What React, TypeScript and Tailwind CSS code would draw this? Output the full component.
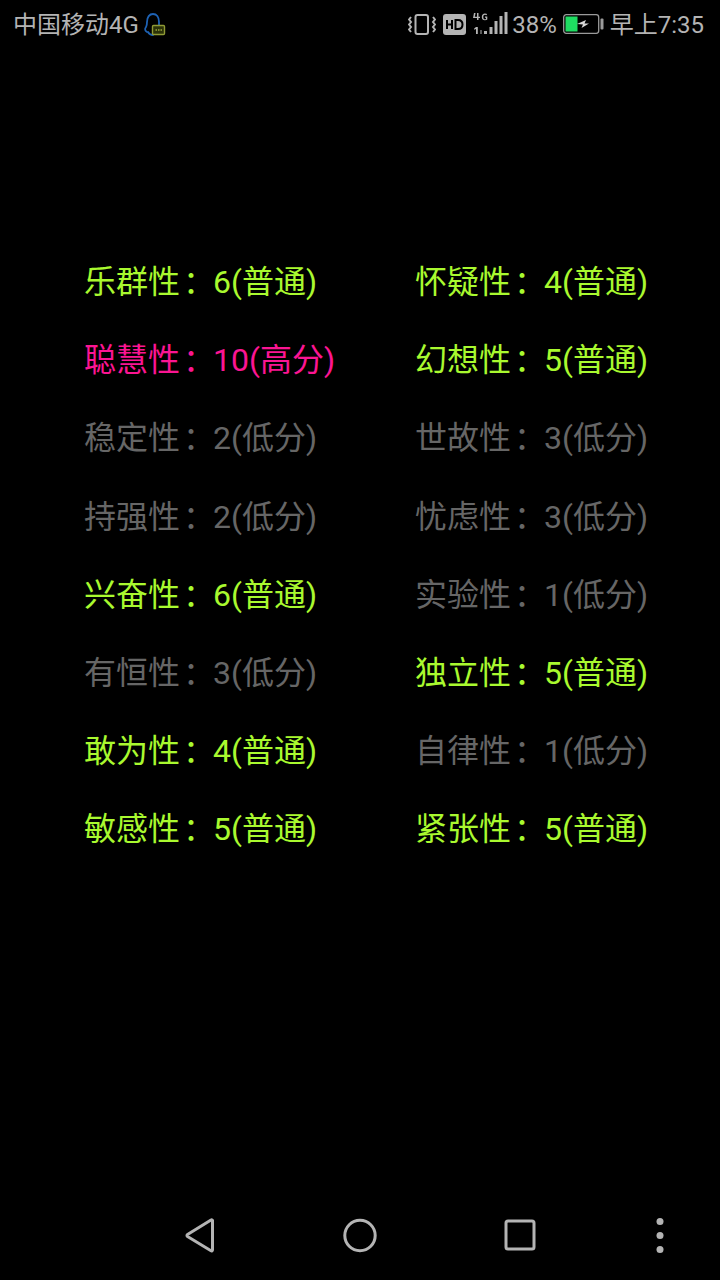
const G = "text-[#a9f92f]";
const P = "text-[#fb1592]";
const L = "text-[#666666]";

const rows: [string, string, string][] = [
  ["乐群性", "6(普通)", G],
  ["怀疑性", "4(普通)", G],
  ["聪慧性", "10(高分)", P],
  ["幻想性", "5(普通)", G],
  ["稳定性", "2(低分)", L],
  ["世故性", "3(低分)", L],
  ["持强性", "2(低分)", L],
  ["忧虑性", "3(低分)", L],
  ["兴奋性", "6(普通)", G],
  ["实验性", "1(低分)", L],
  ["有恒性", "3(低分)", L],
  ["独立性", "5(普通)", G],
  ["敢为性", "4(普通)", G],
  ["自律性", "1(低分)", L],
  ["敏感性", "5(普通)", G],
  ["紧张性", "5(普通)", G],
];

const font = "font-['Roboto','Noto_Sans_CJK_SC',sans-serif]";

function StatusBar() {
  return (
    <div className={`h-[50px] flex items-center justify-between pl-[13px] pr-[16px] text-[#b4b4b4] ${font}`}>
      <div className="flex items-center">
        <span className="text-[24px] leading-none">中国移动4G</span>
        <svg width="24" height="28" viewBox="0 0 24 28" className="ml-[4px]" fill="none">
          <path d="M4 21c-2-1-2.500-3-1-5 .5-1 1-2 1-5 0-5 2.500-8 6-8s6 3 6 8v3" stroke="#1e62b4" strokeWidth="1.800" strokeLinecap="round" />
          <path d="M5 21c1 2 3 3 5 3" stroke="#1e62b4" strokeWidth="1.800" strokeLinecap="round" />
          <rect x="9.500" y="14.500" width="12" height="9" rx="1" fill="#2b3208" stroke="#8f9a35" strokeWidth="1.400" />
          <path d="M12.500 19h1.500M15 19h1.500M17.500 19h1.500" stroke="#9aa53a" strokeWidth="1.400" />
        </svg>
      </div>
      <div className="flex items-center">
        <svg width="28" height="24" viewBox="0 0 28 24" fill="none" stroke="#b4b4b4">
          <rect x="7.500" y="2" width="12.500" height="19" rx="2" strokeWidth="2" />
          <path d="M3 4l-2 2.500L3 9l-2 2.500L3 14l-2 2.500L3 19M25 4l2 2.500L25 9l2 2.500L25 14l2 2.500L25 19" strokeWidth="2" />
        </svg>
        <svg width="24" height="22" viewBox="0 0 24 22" className="ml-[7px]">
          <rect x="0" y="0" width="23" height="21" rx="3" fill="#b4b4b4" />
          <path d="M4 6v9M4 10.500h5M9 6v9" stroke="#000" strokeWidth="2" fill="none" />
          <path d="M12.500 6v9h2.500c3 0 4.500-1.500 4.500-4.500S18 6 15 6z" stroke="#000" strokeWidth="2" fill="none" />
        </svg>
        <svg width="36" height="26" viewBox="0 0 36 26" className="ml-[6px]" fill="#b4b4b4">
          <path d="M1 1l-1 5h4v2h1.500V6H7V4.800H5.500V1H4v3.800H1.800L2.600 1zM12 1.500c-2 0-3.200 1.300-3.200 3.500s1.200 3.300 3.200 3.300c1 0 1.800-.3 2.300-.7V4.500H12v1.200h1v1.400c-.3.100-.6.200-1 .2-1.100 0-1.700-.8-1.700-2.300s.7-2.300 1.700-2.300c.6 0 1.100.2 1.500.5l.6-1.100c-.5-.4-1.200-.6-2.100-.6z" />
          <path d="M3 15h1.800v7H3v-5l-1.800.8v-1.300zM7.500 18h1v4h-1z" />
          <rect x="11" y="19" width="3" height="3" />
          <rect x="16.500" y="15" width="3" height="7" />
          <rect x="21.500" y="9" width="3" height="13" />
          <rect x="26.500" y="4" width="3" height="18" />
          <rect x="31.500" y="-1" width="3" height="23" />
        </svg>
        <span className="text-[24px] leading-none ml-[3px]">38%</span>
        <svg width="41" height="22" viewBox="0 0 41 22" className="ml-[6px]" fill="none">
          <rect x="0.700" y="0.700" width="35" height="18.600" rx="2.500" stroke="#9a9a9a" strokeWidth="1.300" />
          <rect x="2.500" y="2.500" width="12" height="15" fill="#1fdc62" />
          <path d="M14 10l9-4-1.500 3.500H26l-7.500 4.500 1.500-3.500z" fill="#d8d8d8" />
          <rect x="37.500" y="4.500" width="3" height="11" rx="1" fill="#9a9a9a" />
        </svg>
        <span className="text-[24px] leading-none ml-[6px]">早上7:35</span>
      </div>
    </div>
  );
}

function NavBar() {
  return (
    <div className="h-[88px] pt-[24px]">
      <svg width="720" height="50" viewBox="0 0 720 50" fill="none" stroke="#b4b4b4" strokeWidth="3" className="block">
        <path d="M212.500 4.500v29.500a1 1 0 0 1-1.500.8L187.500 20.500a1.200 1.200 0 0 1 0-2L211 4a1 1 0 0 1 1.500.5z" strokeLinejoin="round" />
        <circle cx="360" cy="19.500" r="15.200" />
        <rect x="506" y="5" width="28" height="28" rx="2" />
        <circle cx="660" cy="5.500" r="3.500" fill="#b4b4b4" stroke="none" />
        <circle cx="660" cy="19.500" r="3.500" fill="#b4b4b4" stroke="none" />
        <circle cx="660" cy="33.500" r="3.500" fill="#b4b4b4" stroke="none" />
      </svg>
    </div>
  );
}

export default function App() {
  return (
    <div className={`w-[720px] h-[1280px] bg-black flex flex-col overflow-hidden ${font}`}>
      <StatusBar />
      <div className="flex-1 pt-[193px] pl-[84px]">
        <div className="grid grid-cols-[331px_1fr] auto-rows-[78.200px]">
          {rows.map(([name, value, color]) => (
            <div key={name} className={`flex items-center whitespace-pre text-[32px] leading-none ${color}`}>
              <span>{name}</span>
              <span className="ml-[3px] mr-[-2px]">：</span>
              <span>{value}</span>
            </div>
          ))}
        </div>
      </div>
      <NavBar />
    </div>
  );
}
